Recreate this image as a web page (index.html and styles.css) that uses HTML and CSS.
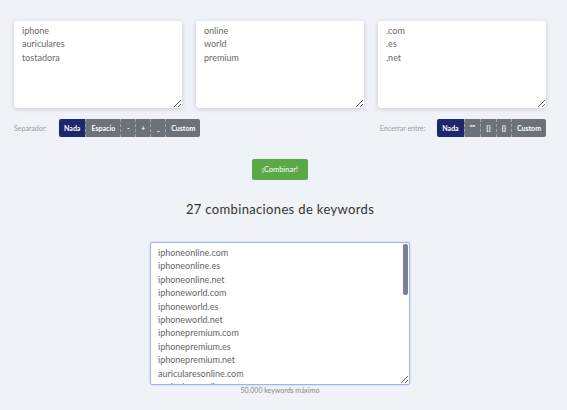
FILE: index.html
```html
<!DOCTYPE html>
<html lang="es">
<head>
<meta charset="utf-8">
<title>Combinador de keywords</title>
<link rel="stylesheet" href="styles.css">
</head>
<body>
<main class="page">
  <section class="inputs">
    <textarea class="box">iphone
auriculares
tostadora</textarea>
    <textarea class="box">online
world
premium</textarea>
    <textarea class="box">.com
.es
.net</textarea>
  </section>

  <section class="options">
    <div class="opt">
      <span class="label">Separador:</span>
      <div class="group">
        <button class="btn active">Nada</button>
        <button class="btn">Espacio</button>
        <button class="btn">-</button>
        <button class="btn">+</button>
        <button class="btn">_</button>
        <button class="btn">Custom</button>
      </div>
    </div>
    <div class="opt">
      <span class="label">Encerrar entre:</span>
      <div class="group">
        <button class="btn active">Nada</button>
        <button class="btn">""</button>
        <button class="btn">[]</button>
        <button class="btn">{}</button>
        <button class="btn">Custom</button>
      </div>
    </div>
  </section>

  <div class="combine-row">
    <button class="combine">¡Combinar!</button>
  </div>

  <h2 class="title">27 combinaciones de keywords</h2>

  <div class="result-wrap">
    <div class="result-box">
      <textarea class="result">iphoneonline.com
iphoneonline.es
iphoneonline.net
iphoneworld.com
iphoneworld.es
iphoneworld.net
iphonepremium.com
iphonepremium.es
iphonepremium.net
auricularesonline.com
auricularesonline.es
auricularesonline.net
auricularesworld.com
auricularesworld.es
auricularesworld.net
auricularespremium.com
auricularespremium.es
auricularespremium.net
tostadoraonline.com
tostadoraonline.es
tostadoraonline.net
tostadoraworld.com
tostadoraworld.es
tostadoraworld.net
tostadorapremium.com
tostadorapremium.es
tostadorapremium.net</textarea>
      <span class="thumb"></span>
    </div>
    <p class="note">50.000 keywords máximo</p>
  </div>
</main>
</body>
</html>
```

FILE: styles.css
```css
html, body {
  margin: 0;
  padding: 0;
}
body {
  background: #eff2f7;
  font-family: Lato, "Liberation Sans", sans-serif;
  color: #555;
  height: 410px;
  overflow: hidden;
}
.page {
  padding: 21px 21px 0 14px;
}
.inputs {
  display: grid;
  grid-template-columns: 168px 168px 168px;
  column-gap: 14px;
}
.box {
  box-sizing: border-box;
  width: 168px;
  height: 87px;
  border: none;
  border-radius: 3px;
  background: #fff;
  box-shadow: 0 1px 4px rgba(60, 70, 90, 0.22);
  padding: 3px 8px;
  font-family: Lato, "Liberation Sans", sans-serif;
  font-size: 9px;
  line-height: 13.3px;
  color: #6a6a6a;
  resize: vertical;
  outline: none;
  margin: 0;
}
.options {
  display: flex;
  justify-content: space-between;
  margin-top: 11px;
  height: 18px;
}
.opt {
  display: flex;
  align-items: center;
  gap: 12px;
}
.label {
  font-size: 7px;
  color: #9a9ea6;
}
.group {
  display: flex;
  height: 18px;
  border-radius: 2px;
  overflow: hidden;
}
.btn {
  border: none;
  margin: 0;
  background: #6c7279;
  color: #fff;
  font-family: Lato, "Liberation Sans", sans-serif;
  font-size: 7px;
  font-weight: 700;
  padding: 0 5px;
  min-width: 15px;
  height: 18px;
  border-left: 1px dashed rgba(255, 255, 255, 0.35);
}
.btn:first-child {
  border-left: none;
}
.btn.active {
  background: #1e276b;
}
.combine-row {
  display: flex;
  justify-content: center;
  margin-top: 22px;
}
.combine {
  width: 56px;
  height: 21px;
  border: none;
  border-radius: 2px;
  background: #5aa847;
  color: #fff;
  font-family: Lato, "Liberation Sans", sans-serif;
  font-size: 7.5px;
  padding: 0;
}
.title {
  margin: 20px 0 0;
  text-align: center;
  font-weight: 400;
  font-size: 13px;
  letter-spacing: 0.35px;
  line-height: 18px;
  color: #333;
}
.result-wrap {
  display: flex;
  flex-direction: column;
  align-items: center;
  margin-top: 24px;
}
.result-box {
  position: relative;
  width: 260px;
  height: 143px;
}
.result {
  display: block;
  box-sizing: border-box;
  width: 260px;
  height: 143px;
  margin: 0;
  border: 1px solid #a3b3e8;
  border-radius: 2px;
  box-shadow: 0 0 2px rgba(110, 135, 230, 0.45);
  background: #fff;
  padding: 3px 7px;
  font-family: Lato, "Liberation Sans", sans-serif;
  font-size: 9px;
  line-height: 13.4px;
  color: #666;
  outline: none;
  resize: vertical;
  overflow: hidden;
}
.thumb {
  position: absolute;
  top: 2px;
  right: 2px;
  width: 5px;
  height: 51px;
  border-radius: 2px;
  background: #7a8197;
}
.note {
  margin: 1px 0 0;
  font-size: 7px;
  color: #888;
  line-height: 9px;
}
```
